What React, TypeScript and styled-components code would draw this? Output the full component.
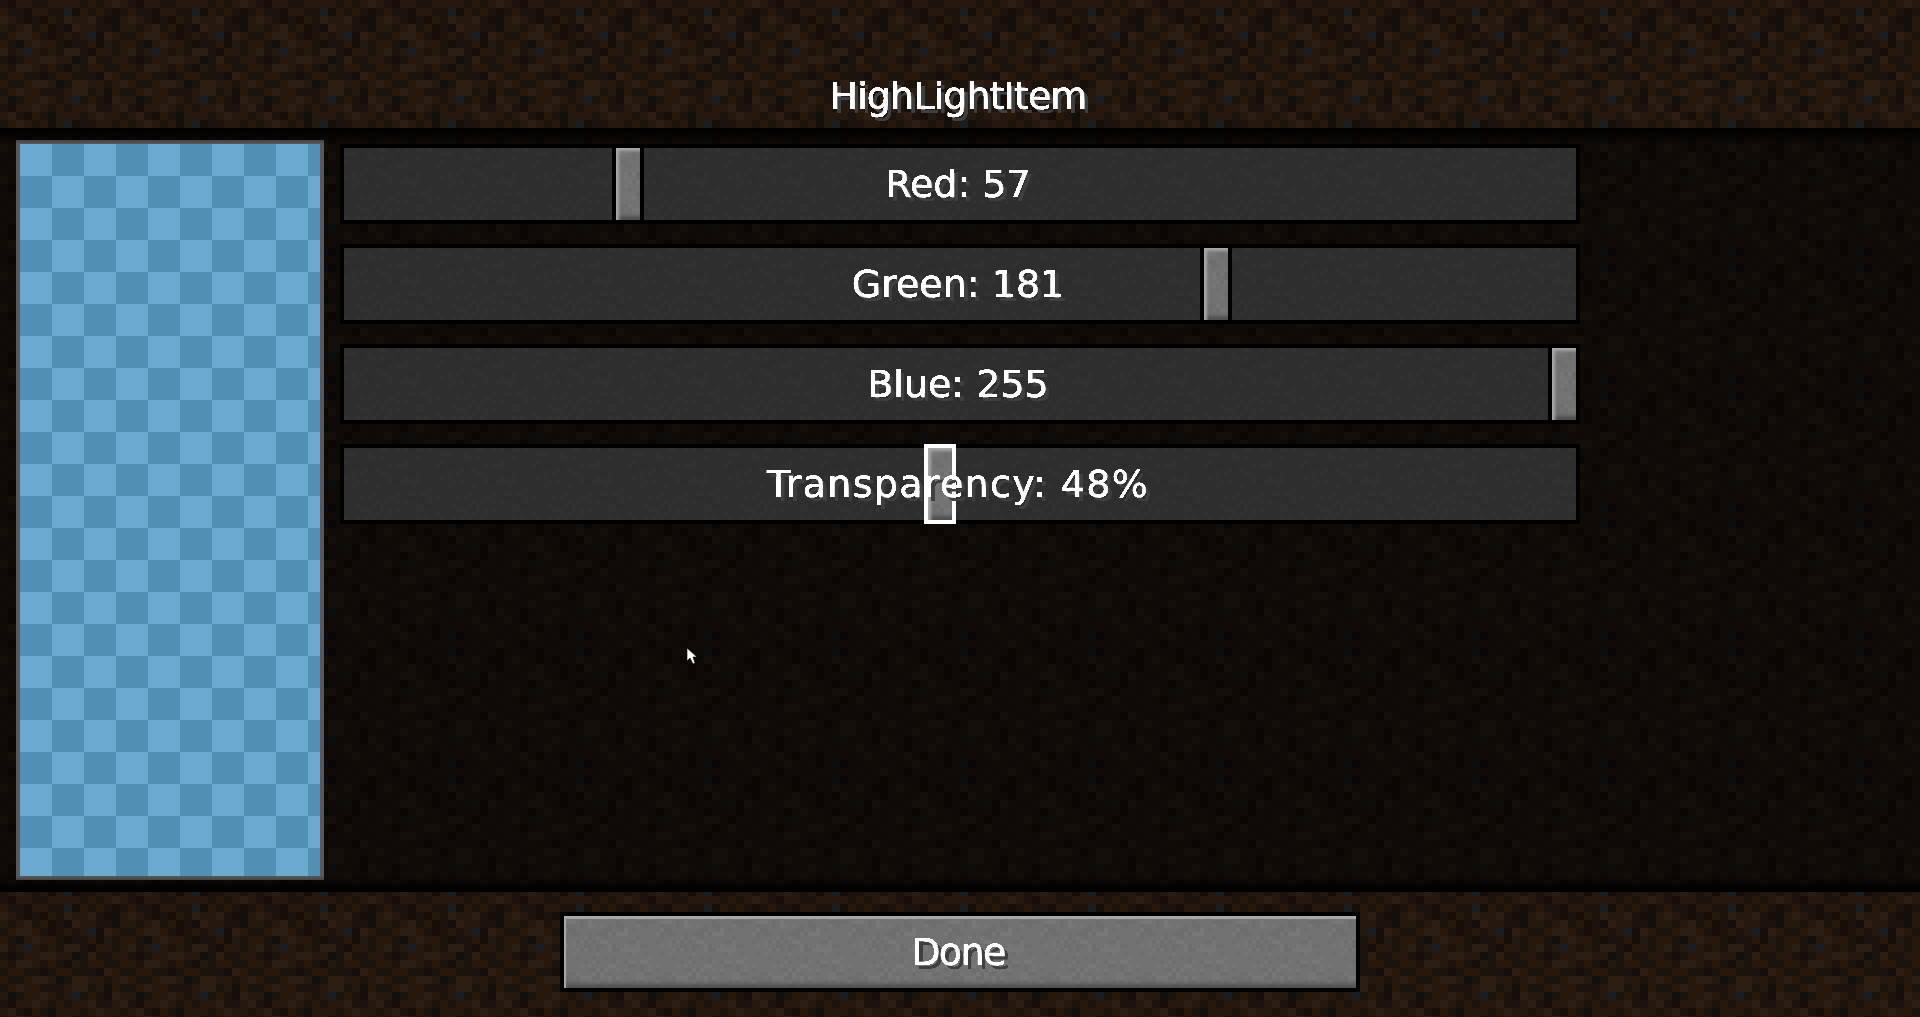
import React from "react";
import styled, { createGlobalStyle } from "styled-components";

const dirtRows = [
  "1022112222121232",
  "2110221140212101",
  "3210102132231002",
  "2123120103221102",
  "1233210121240321",
  "2102322101120212",
  "3124212133102212",
  "1012233220131122",
  "2133212102122112",
  "1221101221110321",
  "2112332013322123",
  "1232211123312021",
  "2012232124121032",
  "1022321212231123",
  "2310210222123221",
  "1232120240112212",
];
const dirtTones = ["#140d08", "#1c130c", "#24180f", "#2c1e14", "#1b1d21"];

const toDataUrl = (size: number, rects: string) =>
  `url("data:image/svg+xml,${encodeURIComponent(
    `<svg xmlns='http://www.w3.org/2000/svg' width='${size}' height='${size}' shape-rendering='crispEdges'>${rects}</svg>`
  )}")`;

const dirtTile = toDataUrl(
  128,
  dirtRows
    .map((row, y) =>
      row
        .split("")
        .map((tone, x) => `<rect x='${x * 8}' y='${y * 8}' width='8' height='8' fill='${dirtTones[+tone]}'/>`)
        .join("")
    )
    .join("")
);

// stone grain for the widgets, 4px cells like the game texture
const grain = (size: number, strength: number) => {
  let seed = 7;
  let rects = "";
  for (let y = 0; y < size; y += 4) {
    for (let x = 0; x < size; x += 4) {
      seed = (seed * 16807) % 2147483647;
      const n = seed % 100;
      if (n < 22) rects += `<rect x='${x}' y='${y}' width='4' height='4' fill='#000' opacity='${strength}'/>`;
      else if (n > 78) rects += `<rect x='${x}' y='${y}' width='4' height='4' fill='#fff' opacity='${strength}'/>`;
    }
  }
  return toDataUrl(size, rects);
};
const buttonGrain = grain(96, 0.035);
const trackGrain = grain(96, 0.015);

const GlobalStyle = createGlobalStyle`
  html, body {
    margin: 0;
    height: 100%;
    overflow: hidden;
    background: #000;
  }
`;

const Screen = styled.div`
  position: relative;
  height: 100vh;
  display: grid;
  grid-template-rows: 128px 1fr 125px;
  font-family: "DejaVu Sans", "Liberation Sans", sans-serif;
  color: #fff;
`;

const Header = styled.header`
  display: flex;
  justify-content: center;
  align-items: center;
  padding-top: 64px;
  background: ${dirtTile} 0 0 fixed;
`;

const Caption = styled.span<{ $tracking?: number }>`
  position: relative;
  padding: 6px 12px 6px 8px;
  font-size: 38px;
  line-height: 44px;
  letter-spacing: ${(p) => p.$tracking ?? 0}px;
  white-space: nowrap;
  -webkit-text-stroke: 0.5px #fff;
  text-shadow: 4px 4px 0 #3f3f3f;
  filter: url(#hardEdge);
`;

const ListArea = styled.main`
  position: relative;
  display: flex;
  gap: 16px;
  padding: 12px 16px;
  background: linear-gradient(rgba(0, 0, 0, 0.55), rgba(0, 0, 0, 0.55)), ${dirtTile} 0 0 fixed;

  &::before,
  &::after {
    content: "";
    position: absolute;
    left: 0;
    right: 0;
    height: 16px;
    pointer-events: none;
  }
  &::before {
    top: 0;
    background: linear-gradient(#000, transparent);
  }
  &::after {
    bottom: 0;
    background: linear-gradient(transparent, #000);
  }
`;

const Preview = styled.div`
  flex: none;
  width: 300px;
  height: 732px;
  border: 4px solid #5a585a;
  background: repeating-conic-gradient(#528fb4 0 25%, #6ca9d1 0 50%) 0 0 / 64px 64px;
`;

const SliderColumn = styled.div`
  flex: none;
  width: 1240px;
  padding-top: 4px;
  display: flex;
  flex-direction: column;
  gap: 20px;
`;

const SliderTrack = styled.div`
  position: relative;
  height: 72px;
  display: flex;
  align-items: center;
  justify-content: center;
  border: 4px solid #000;
  background: ${trackGrain} #2e2e2e;
`;

const Thumb = styled.div<{ $active?: boolean }>`
  position: absolute;
  top: -4px;
  bottom: -4px;
  width: 24px;
  border: 4px solid ${(p) => (p.$active ? "#fff" : "#000")};
  background: ${buttonGrain} #737373;
  background-clip: padding-box;
  box-shadow: inset 4px 4px 3px -1px #a8a8a8, inset 0 -5px 3px -1px #505050;
`;

const Footer = styled.footer`
  display: flex;
  justify-content: center;
  padding-top: 20px;
  background: ${dirtTile} 0 0 fixed;
`;

const DoneButton = styled.button`
  width: 800px;
  height: 80px;
  padding: 0;
  display: flex;
  align-items: center;
  justify-content: center;
  border: 4px solid #000;
  font: inherit;
  color: inherit;
  background: ${buttonGrain} #727272;
  box-shadow: inset 3px 4px 1px -1px #a9a9a9, inset 0 -7px 4px -3px #4e4e4e;
`;

const CursorMark = styled.svg`
  position: absolute;
  left: 686px;
  top: 647px;
  width: 13px;
  height: 19px;
`;

const HiddenDefs = styled.svg`
  position: absolute;
  width: 0;
  height: 0;
`;

const sliders = [
  { label: "Red: 57", value: 57, tracking: 0 },
  { label: "Green: 181", value: 181, tracking: 0 },
  { label: "Blue: 255", value: 255, tracking: 0 },
  { label: "Transparency: 48%", value: 123, tracking: 1.3, active: true },
];

// thumb moves in whole game pixels (4px), over 1208px of travel
const thumbLeft = (value: number) => Math.ceil(((value / 255) * 1208) / 4) * 4 - 4;

const App = () => {
  return (
    <Screen>
      <GlobalStyle />
      <HiddenDefs aria-hidden="true">
        <filter id="hardEdge" colorInterpolationFilters="sRGB">
          <feComponentTransfer>
            <feFuncA type="linear" slope="4" intercept="-1.5" />
          </feComponentTransfer>
        </filter>
      </HiddenDefs>
      <Header>
        <Caption $tracking={-0.9}>HighLightItem</Caption>
      </Header>
      <ListArea>
        <Preview />
        <SliderColumn>
          {sliders.map((s) => (
            <SliderTrack key={s.label}>
              <Thumb $active={s.active} style={{ left: thumbLeft(s.value) }} />
              <Caption $tracking={s.tracking}>{s.label}</Caption>
            </SliderTrack>
          ))}
        </SliderColumn>
      </ListArea>
      <Footer>
        <DoneButton>
          <Caption $tracking={-1.6}>Done</Caption>
        </DoneButton>
      </Footer>
      <CursorMark viewBox="0 0 13 19">
        <path d="M1 1 L1 14 L4 11 L7 17 L9 16 L7 10 L11 10 Z" fill="#fff" stroke="#000" strokeWidth="0.6" />
      </CursorMark>
    </Screen>
  );
};

export default App;
